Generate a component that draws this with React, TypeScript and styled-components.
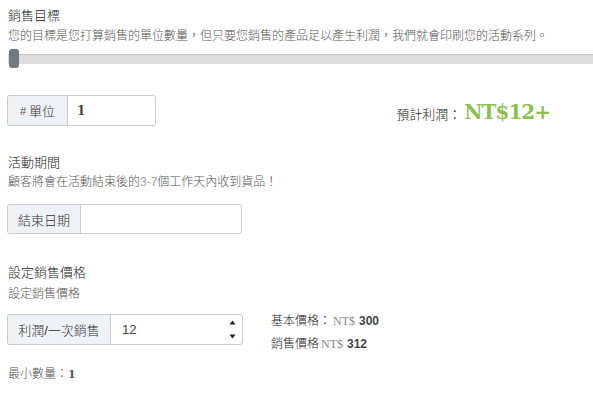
import React from 'react';
import styled, { createGlobalStyle } from 'styled-components';

// ==============================================================================
// Global
// ==============================================================================

const GlobalStyle = createGlobalStyle`
  html, body {
    margin: 0;
    padding: 0;
    background: #ffffff;
  }
  body {
    font-family: "Liberation Sans", "Noto Sans CJK TC", sans-serif;
    font-size: 12px;
    font-weight: 300;
    color: #333333;
    overflow: hidden;
  }
`;

// ==============================================================================
// Styled Components
// ==============================================================================

const Page = styled.div`
  width: 593px;
  height: 402px;
  padding: 6px 0 0 7px;
  box-sizing: border-box;
  overflow: hidden;
`;

const Title = styled.div<{ $top?: number }>`
  font-size: 13px;
  line-height: 20px;
  color: #222222;
  margin-top: ${(p) => p.$top ?? 0}px;
  padding-left: 1px;
`;

const Help = styled.div<{ $top?: number }>`
  font-size: 12px;
  line-height: 18px;
  color: #555555;
  margin-top: ${(p) => p.$top ?? 0}px;
  padding-left: 1px;
  white-space: nowrap;
`;

const Muted = styled.span`
  color: #a0a0a0;
`;

const SliderRow = styled.div`
  margin-top: 4px;
  height: 19px;
  display: flex;
  align-items: center;
  margin-right: -20px;
  padding-left: 1px;
`;

const Track = styled.div`
  flex: 1;
  height: 10px;
  background: #dddddd;
  box-shadow: inset 0 1px 1px rgba(0, 0, 0, 0.12);
  display: flex;
  align-items: center;
`;

const Thumb = styled.div`
  width: 10px;
  height: 19px;
  margin-left: 1px;
  border-radius: 3px;
  background: #727a81;
`;

const Row = styled.div<{ $top: number; $align?: string }>`
  display: flex;
  align-items: ${(p) => p.$align ?? 'center'};
  margin-top: ${(p) => p.$top}px;
`;

const InputGroup = styled.div<{ $width: number; $height?: number }>`
  display: flex;
  width: ${(p) => p.$width}px;
  height: ${(p) => p.$height ?? 31}px;
  border: 1px solid #cccccc;
  border-radius: 3px;
  box-sizing: border-box;
  overflow: hidden;
  background: #ffffff;
  flex-shrink: 0;
`;

const Addon = styled.div<{ $width: number }>`
  width: ${(p) => p.$width}px;
  flex-shrink: 0;
  display: flex;
  align-items: center;
  justify-content: center;
  background: #eef1f6;
  border-right: 1px solid #cccccc;
  font-size: 13px;
  color: #333333;
  box-sizing: border-box;
`;

const Hash = styled.span`
  font-size: 11px;
  color: #555555;
  margin-right: 3px;
`;

const Field = styled.div<{ $serif?: boolean }>`
  flex: 1;
  display: flex;
  align-items: center;
  padding: 0 6px 0 ${(p) => (p.$serif ? 9 : 11)}px;
  font-family: ${(p) => (p.$serif ? '"DejaVu Serif", "Liberation Serif", serif' : '"Liberation Sans", sans-serif')};
  font-weight: ${(p) => (p.$serif ? 700 : 400)};
  font-size: ${(p) => (p.$serif ? 12 : 13)}px;
  color: #444444;
`;

const FieldValue = styled.span`
  flex: 1;
`;

const Spinner = styled.div`
  display: flex;
  flex-direction: column;
  justify-content: space-between;
  height: 19px;
`;

const Profit = styled.div`
  margin-left: auto;
  margin-right: 43px;
  display: flex;
  align-items: baseline;
  gap: 3px;
  padding-top: 2px;
`;

const ProfitLabel = styled.span`
  font-size: 13px;
  color: #222222;
`;

const ProfitValue = styled.span`
  font-family: "DejaVu Serif", "Liberation Serif", serif;
  font-weight: 700;
  font-size: 20px;
  letter-spacing: -1px;
  color: #8cc152;
`;

const PriceInfo = styled.div`
  margin-left: 28px;
  display: flex;
  flex-direction: column;
  gap: 5px;
  margin-top: -2px;
`;

const PriceLine = styled.div`
  font-size: 12px;
  line-height: 18px;
  color: #222222;
  white-space: nowrap;
`;

const Currency = styled.span`
  font-family: "Liberation Serif", serif;
  color: #888888;
  margin: 0 4px 0 2px;
`;

const Amount = styled.span`
  font-family: "Liberation Sans", sans-serif;
  font-weight: 700;
  color: #444444;
`;

const MinQty = styled.div`
  margin-top: 12px;
  font-size: 12px;
  line-height: 18px;
  color: #555555;
  padding-left: 1px;
`;

const MinQtyValue = styled.span`
  font-family: "DejaVu Serif", serif;
  font-weight: 700;
  font-size: 11px;
  color: #555555;
`;

// ==============================================================================
// Main Component
// ==============================================================================

const SpinArrows: React.FC = () => (
  <Spinner>
    <svg width="7" height="5" viewBox="0 0 7 5">
      <path d="M3.5 0.5 L6.5 4.5 L0.5 4.5 Z" fill="#222" />
    </svg>
    <svg width="7" height="5" viewBox="0 0 7 5">
      <path d="M0.5 0.5 L6.5 0.5 L3.5 4.5 Z" fill="#222" />
    </svg>
  </Spinner>
);

const App: React.FC = () => {
  return (
    <Page>
      <GlobalStyle />

      <Title>銷售目標</Title>
      <Help $top={1}>您的目標是您打算銷售的單位數量，但只要您銷售的產品足以產生利潤，我們就會印刷您的活動系列。</Help>
      <SliderRow>
        <Track>
          <Thumb />
        </Track>
      </SliderRow>

      <Row $top={27}>
        <InputGroup $width={149}>
          <Addon $width={60}>
            <Hash>#</Hash>單位
          </Addon>
          <Field $serif>
            <FieldValue>1</FieldValue>
          </Field>
        </InputGroup>
        <Profit>
          <ProfitLabel>預計利潤：</ProfitLabel>
          <ProfitValue>NT$12+</ProfitValue>
        </Profit>
      </Row>

      <Title $top={27}>活動期間</Title>
      <Help>
        顧客將會在活動結束後的<Muted>3-7</Muted>個工作天內收到貨品！
      </Help>
      <Row $top={13}>
        <InputGroup $width={235} $height={30}>
          <Addon $width={73}>結束日期</Addon>
          <Field />
        </InputGroup>
      </Row>

      <Title $top={29}>設定銷售價格</Title>
      <Help $top={2}>設定銷售價格</Help>
      <Row $top={11} $align="flex-start">
        <InputGroup $width={236}>
          <Addon $width={103}>利潤/一次銷售</Addon>
          <Field>
            <FieldValue>12</FieldValue>
            <SpinArrows />
          </Field>
        </InputGroup>
        <PriceInfo>
          <PriceLine>
            基本價格：<Currency>NT$</Currency>
            <Amount>300</Amount>
          </PriceLine>
          <PriceLine>
            銷售價格<Currency>NT$</Currency>
            <Amount>312</Amount>
          </PriceLine>
        </PriceInfo>
      </Row>

      <MinQty>
        最小數量：<MinQtyValue>1</MinQtyValue>
      </MinQty>
    </Page>
  );
};

export default App;
